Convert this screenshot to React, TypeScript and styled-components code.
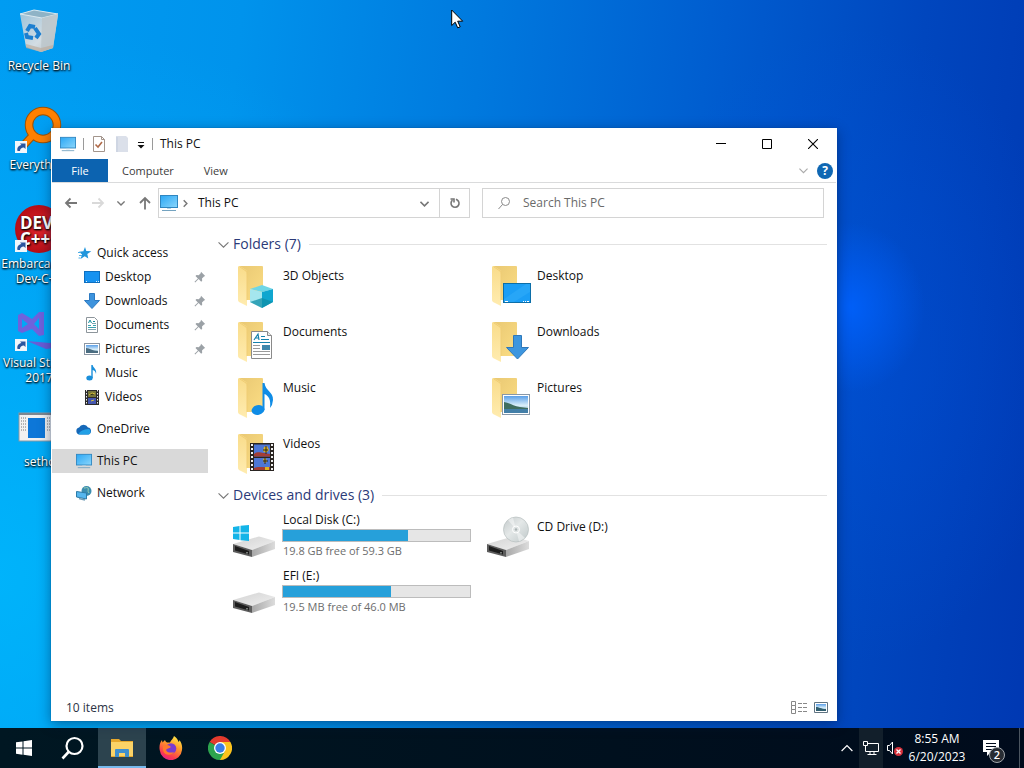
import React from "react";
import styled, { createGlobalStyle } from "styled-components";

const GlobalStyle = createGlobalStyle`
  *, *::before, *::after { box-sizing: border-box; }
  html, body { margin: 0; height: 100%; overflow: hidden; }
  body, button, input { font-family: "Open Sans", "Noto Sans", sans-serif; font-size: 12px; line-height: 16px; }
  button { margin: 0; padding: 0; border: 0; background: none; color: inherit; cursor: default; }
  ul { list-style: none; margin: 0; padding: 0; }
  svg { display: block; flex: none; }
`;

/* ---------- desktop ---------- */

const Screen = styled.div`
  height: 100vh;
  display: flex;
  flex-direction: column;
  background:
    radial-gradient(ellipse 75px 85px at 83% 40%, rgba(0, 98, 255, 0.85), rgba(0, 84, 240, 0) 100%),
    radial-gradient(ellipse 220px 320px at 83% 45%, rgba(0, 84, 225, 0.45), rgba(0, 84, 225, 0) 100%),
    radial-gradient(ellipse 560px 560px at 0% 75%, rgba(0, 190, 255, 0.7), rgba(0, 180, 255, 0) 100%),
    linear-gradient(96deg, #009cf2 0%, #0093ec 22%, #0079de 44%, #005ccf 66%, #0046be 84%, #0038b2 100%);
`;

const DesktopArea = styled.main`
  position: relative;
  flex: 1;
  min-height: 0;
`;

const Shortcuts = styled.ul`
  display: flex;
  flex-direction: column;
  width: 78px;
  padding-top: 7px;
`;

const Shortcut = styled.button`
  display: flex;
  flex-direction: column;
  align-items: center;
  gap: 3px;
  width: 100%;
  height: 99px;
  color: #fff;
  line-height: 15px;
  text-shadow: 0 1px 2px #000, 1px 1px 2px rgba(0, 0, 0, 0.8);
`;

const Pointer = styled.svg`
  position: absolute;
  left: 451px;
  top: 9px;
`;

/* ---------- explorer window ---------- */

const Window = styled.section`
  position: absolute;
  inset: 128px 187px 7px 51px;
  display: flex;
  flex-direction: column;
  padding: 1px;
  background: #fff;
  color: #111;
  box-shadow: 0 0 1px rgba(0, 50, 110, 0.5), 0 3px 12px rgba(0, 20, 60, 0.45);
`;

const TitleBar = styled.header`
  display: flex;
  align-items: center;
  height: 30px;
  flex: none;
  padding-left: 8px;
`;

const QuickTools = styled.div`
  display: flex;
  align-items: center;
  gap: 7px;
`;

const Separator = styled.span`
  width: 1px;
  height: 12px;
  background: #9a9a9a;
`;

const WindowTitle = styled.h1`
  flex: 1;
  margin: 0 0 0 7px;
  font-size: 12px;
  font-weight: 400;
`;

const Caption = styled.button`
  display: flex;
  align-items: center;
  justify-content: center;
  width: 46px;
  height: 30px;
`;

const Ribbon = styled.nav`
  display: flex;
  align-items: stretch;
  height: 24px;
  flex: none;
  border-bottom: 1px solid #dadbdc;
`;

const Tab = styled.button<{ $primary?: boolean }>`
  min-width: 56px;
  padding: 0 14px;
  background: ${(p) => (p.$primary ? "#0c63b0" : "transparent")};
  color: ${(p) => (p.$primary ? "#fff" : "#3c3c3c")};
  font-size: 11px;
`;

const RibbonEnd = styled.div`
  display: flex;
  align-items: center;
  gap: 9px;
  margin-left: auto;
  padding-right: 3px;
`;

const HelpButton = styled.button`
  width: 16px;
  height: 16px;
  border-radius: 50%;
  background: #0f67b3;
  color: #fff;
  font-weight: 700;
`;

const NavRow = styled.div`
  display: flex;
  align-items: center;
  height: 40px;
  flex: none;
  padding: 0 12px 0 12px;
`;

const NavButtons = styled.div`
  display: flex;
  align-items: center;
  justify-content: space-between;
  width: 94px;
  padding-right: 6px;
`;

const AddressBar = styled.div`
  flex: 1;
  display: flex;
  align-items: center;
  height: 30px;
  min-width: 0;
  padding-left: 1px;
  border: 1px solid #d4d4d4;
`;

const CrumbMark = styled.span`
  padding-left: 3px;
`;

const Crumb = styled.button`
  flex: 1;
  margin-left: 8px;
  text-align: left;
`;

const AddressButton = styled.button<{ $divided?: boolean }>`
  display: flex;
  align-items: center;
  justify-content: center;
  width: 30px;
  height: 28px;
  border-left: ${(p) => (p.$divided ? "1px solid #d4d4d4" : "0")};
`;

const SearchBox = styled.label`
  display: flex;
  align-items: center;
  gap: 12px;
  width: 342px;
  height: 30px;
  margin-left: 12px;
  padding: 0 14px;
  border: 1px solid #d4d4d4;
`;

const SearchInput = styled.input`
  flex: 1;
  min-width: 0;
  padding: 0;
  border: 0;
  outline: 0;
  background: transparent;
  &::placeholder { color: #6a6a6a; opacity: 1; }
`;

const Body = styled.div`
  flex: 1;
  display: flex;
  min-height: 0;
`;

const Sidebar = styled.nav`
  width: 156px;
  flex: none;
  display: flex;
  flex-direction: column;
  gap: 8px;
  padding-top: 18px;
`;

const SideItem = styled.button<{ $nested?: boolean; $selected?: boolean }>`
  display: flex;
  align-items: center;
  gap: 5px;
  width: 100%;
  height: 24px;
  padding: 0 2px 0 ${(p) => (p.$nested ? 32 : 24)}px;
  background: ${(p) => (p.$selected ? "#d9d9d9" : "transparent")};
  text-align: left;
`;

const SideLabel = styled.span`
  flex: 1;
`;

const Content = styled.div`
  flex: 1;
  min-width: 0;
  padding: 10px 9px 0 10px;
`;

const GroupHeader = styled.h2`
  display: flex;
  align-items: center;
  gap: 4px;
  height: 22px;
  margin: 0 0 5px;
  color: #2b3a78;
  font-size: 14px;
  font-weight: 400;
  &::after {
    content: "";
    flex: 1;
    height: 1px;
    margin-left: 4px;
    background: #e2e2e2;
  }
`;

const Tiles = styled.ul`
  display: grid;
  grid-template-columns: repeat(auto-fill, 254px);
  grid-auto-rows: 56px;
  padding-left: 12px;
`;

const Tile = styled.button`
  display: flex;
  align-items: flex-start;
  gap: 4px;
  width: 100%;
  height: 56px;
  text-align: left;
  & > svg { margin-top: 4px; }
`;

const TileText = styled.span<{ $detailed?: boolean }>`
  display: flex;
  flex-direction: column;
  padding-top: ${(p) => (p.$detailed ? 1 : 8)}px;
`;

const TileLine = styled.span<{ $muted?: boolean }>`
  padding-left: 1px;
  color: ${(p) => (p.$muted ? "#6d6d6d" : "#111")};
  font-size: ${(p) => (p.$muted ? 11 : 12)}px;
`;

const Meter = styled.span`
  width: 189px;
  height: 13px;
  margin: 1px 0;
  border: 1px solid #bcbcbc;
  background: #e6e6e6;
`;

const MeterFill = styled.span`
  display: block;
  height: 100%;
  background: #26a0da;
`;

const StatusBar = styled.footer`
  display: flex;
  align-items: center;
  height: 24px;
  flex: none;
  padding: 0 8px 0 14px;
  color: #2b3345;
`;

const ViewButtons = styled.div`
  display: flex;
  gap: 7px;
  margin-left: auto;
`;

/* ---------- taskbar ---------- */

const Taskbar = styled.footer`
  display: flex;
  height: 40px;
  flex: none;
  background: linear-gradient(90deg, #001722, #00101e 60%, #000b1c);
  color: #fff;
`;

const Apps = styled.div`
  display: flex;
  gap: 1px;
`;

const AppButton = styled.button<{ $active?: boolean }>`
  display: flex;
  align-items: center;
  justify-content: center;
  width: 48px;
  height: 40px;
  background: ${(p) => (p.$active ? "#2c434e" : "transparent")};
  box-shadow: ${(p) => (p.$active ? "inset 0 -2px #76b9ed" : "none")};
`;

const Tray = styled.div`
  display: flex;
  margin-left: auto;
`;

const TrayButton = styled.button<{ $lit?: boolean; $wide?: boolean }>`
  display: flex;
  align-items: center;
  justify-content: center;
  width: ${(p) => (p.$wide ? 48 : 24)}px;
  height: 40px;
  background: ${(p) => (p.$lit ? "#121f2b" : "transparent")};
`;

const Clock = styled.button`
  display: flex;
  flex-direction: column;
  align-items: center;
  justify-content: center;
  width: 60px;
  line-height: 18px;
`;

const Notifications = styled(TrayButton)`
  position: relative;
  margin-right: 4px;
`;

const Badge = styled.span`
  position: absolute;
  left: 22px;
  top: 19px;
  width: 16px;
  height: 16px;
  border: 1px solid #a3a8ad;
  border-radius: 50%;
  background: #272c33;
  font-size: 11px;
  font-weight: 600;
  line-height: 14px;
  text-align: center;
`;

const PeekButton = styled.button`
  width: 5px;
  border-left: 1px solid #4b5560;
`;

/* ---------- drawings ---------- */

const Gradients = () => (
  <svg width="0" height="0" style={{ position: "absolute" }} aria-hidden="true">
    <defs>
      <linearGradient id="folderBack" x1="0" y1="0" x2="1" y2="1"><stop offset="0" stopColor="#e9c873" /><stop offset="1" stopColor="#fbdd84" /></linearGradient>
      <linearGradient id="folderFlap" x1="0" y1="0" x2="0" y2="1"><stop offset="0" stopColor="#f9dc8a" /><stop offset="1" stopColor="#ffecb0" /></linearGradient>
      <linearGradient id="screenBlue" x1="0" y1="0" x2="1" y2="1"><stop offset="0" stopColor="#2aa7f5" /><stop offset="1" stopColor="#8bd6fb" /></linearGradient>
      <linearGradient id="driveTop" x1="0" y1="0" x2="1" y2="1"><stop offset="0" stopColor="#d2d2d2" /><stop offset="1" stopColor="#f0f0f0" /></linearGradient>
      <linearGradient id="driveSide" x1="0" y1="0" x2="1" y2="0"><stop offset="0" stopColor="#a8a8a8" /><stop offset="1" stopColor="#dcdcdc" /></linearGradient>
      <linearGradient id="sky" x1="0" y1="0" x2="0" y2="1"><stop offset="0" stopColor="#5b9fe8" /><stop offset=".55" stopColor="#d9effa" /><stop offset="1" stopColor="#77a8c6" /></linearGradient>
      <linearGradient id="disc" x1="0" y1="0" x2="1" y2="1"><stop offset="0" stopColor="#c3c9ca" /><stop offset=".45" stopColor="#e4e8e8" /><stop offset="1" stopColor="#bfc8c9" /></linearGradient>
      <linearGradient id="binSide" x1="0" y1="0" x2="1" y2="1"><stop offset="0" stopColor="#9cc3da" /><stop offset=".6" stopColor="#d3dde3" /><stop offset="1" stopColor="#b5bdc2" /></linearGradient>
      <radialGradient id="devRed"><stop offset="0" stopColor="#e0252c" /><stop offset="1" stopColor="#b50d16" /></radialGradient>
      <linearGradient id="foxFire" x1=".8" y1="0" x2=".3" y2="1"><stop offset="0" stopColor="#fff04a" /><stop offset=".4" stopColor="#ff9a2a" /><stop offset=".8" stopColor="#fb3a4f" /><stop offset="1" stopColor="#e0208c" /></linearGradient>
    </defs>
  </svg>
);

const LinkArrow = () => (
  <g>
    <rect x="0" y="35" width="12" height="12" fill="#f2f6fb" />
    <path d="M2.500 45c-.8-3.500 1-5.500 4-6L5 37.500h5.500V43l-1.600-1.500C6.500 41.500 5 43 5 45z" fill="#2a559f" />
  </g>
);

const BinIcon = () => (
  <svg width="48" height="48" viewBox="0 0 48 48">
    <path d="M5 7 11 40 26 45 38 41 43 8z" fill="url(#binSide)" />
    <path d="M5 7 19 3 43 7 27 11z" fill="#8fb3c6" stroke="#dbe9f0" strokeWidth="1" />
    <path d="M27 11 43 7 38 41 26 45z" fill="#bcc5ca" opacity=".85" />
    <path d="m11 37 15 4 12-3v3l-12 4-15-4z" fill="#bcae9f" opacity=".7" />
    <g fill="none" stroke="#1c7fd0" strokeWidth="4">
      <path d="m12 24 3-5 5 1" /><path d="m20 21 4 6-3 4" /><path d="m18 31-6-1-1-4" />
    </g>
  </svg>
);

const EverythingIcon = () => (
  <svg width="48" height="48" viewBox="0 0 48 48">
    <path d="M19 28 8 40" stroke="#9c5205" strokeWidth="8" />
    <circle cx="28" cy="19" r="14" fill="none" stroke="#9c5205" strokeWidth="8.500" />
    <circle cx="28" cy="19" r="14" fill="none" stroke="#ff8000" strokeWidth="6.500" />
    <path d="M19 28 8 40" stroke="#ff8000" strokeWidth="6" />
    <LinkArrow />
  </svg>
);

const DevIcon = () => (
  <svg width="48" height="48" viewBox="0 0 48 48">
    <circle cx="24" cy="24" r="24" fill="url(#devRed)" />
    <g fill="#fff" fontFamily="Open Sans, sans-serif" fontWeight="700" fontSize="17">
      <text x="5" y="24">DEV</text><text x="5" y="40">C++</text>
    </g>
    <LinkArrow />
  </svg>
);

const StudioIcon = () => (
  <svg width="48" height="48" viewBox="0 0 48 48">
    <path d="M3 11 7 9 17 15 24 8 29 8V31L24 32 17 25 7 29 3 27zM7 15V24L13 20zM24 14 19 20 24 25z" fill="#6f62dc" fillRule="evenodd" />
    <path d="M12 37 35 39 45 35 46 43 31 45z" fill="#6a5cd6" />
    <LinkArrow />
  </svg>
);

const SethcIcon = () => (
  <svg width="48" height="48" viewBox="0 0 48 48">
    <rect x="4" y="10" width="42" height="28" fill="#f1f1f1" stroke="#8a98a3" />
    <path d="M4 11h42" stroke="#7d8790" strokeWidth="2" />
    <rect x="13" y="15" width="17" height="20" fill="#0d77d8" />
    <path d="M6 15h5M6 18h5M6 21h5M6 24h5M6 27h5M32 15h7M32 18h7M32 21h7M32 24h7M32 27h7" stroke="#777" strokeDasharray="1 1" />
  </svg>
);

const PcIcon = ({ size = 18 }: { size?: number }) => (
  <svg width={size} height={size} viewBox="0 0 18 18">
    <rect x=".5" y="1.500" width="17" height="12" fill="url(#screenBlue)" stroke="#2f86c0" />
    <path d="M7 14h4v1H7z" fill="#b7d3e4" /><path d="M2 16.500h14" stroke="#74a3c0" />
  </svg>
);

const CheckPageIcon = () => (
  <svg width="16" height="16" viewBox="0 0 16 16" fill="none">
    <path d="M2.500.5h8l3 3v12h-11z" fill="#fff" stroke="#a3958c" /><path d="M10.500.5v3h3" stroke="#a3958c" />
    <path d="m4.500 8.500 2.500 2.500 4-5" stroke="#b06a48" strokeWidth="1.600" />
  </svg>
);

const NewFolderIcon = () => (
  <svg width="16" height="16" viewBox="0 0 16 16"><path d="M2 0h10l2 2v14H2z" fill="#dbe0ea" /><path d="M2 1h2v15H2z" fill="#cfd6e3" /></svg>
);

const CustomizeIcon = () => (
  <svg width="8" height="9" viewBox="0 0 8 9"><path d="M1 2h6v1H1zM.5 5h7L4 8.500z" fill="#111" /></svg>
);

const Chevron = ({ size = 10, color = "#777", dir = "down", weight = 1.3 }: { size?: number; color?: string; dir?: string; weight?: number }) => (
  <svg width={size} height={size} viewBox="0 0 10 10" fill="none" stroke={color} strokeWidth={weight}>
    <path d={dir === "down" ? "m.5 3 4.500 4.500L9.500 3" : dir === "up" ? "M.5 7.500 5 3l4.500 4.500" : "m3 1.500 3.500 3.500L3 8.500"} />
  </svg>
);

const Arrow = ({ dir, color = "#777" }: { dir: "left" | "right" | "up"; color?: string }) => (
  <svg width="14" height="14" viewBox="0 0 14 14" fill="none" stroke={color} strokeWidth="1.800">
    <path d={dir === "left" ? "M13 7H2M6.500 2.500 2 7l4.500 4.500" : dir === "right" ? "M1 7h11M7.500 2.500 12 7l-4.500 4.500" : "M7 13.500V2M2 7l5-5 5 5"} />
  </svg>
);

const StarIcon = () => (
  <svg width="16" height="16" viewBox="0 0 16 16"><path d="m9 2 1.300 4 5 .2-4 2.700 1 4.600-3.600-2.300-4.200 2.900 1.600-4.700L3 6.800l4.400-.6z" fill="#2196dc" /><path d="M2 7.500h3M3 10.500h3M2.500 13h2" stroke="#4eaee6" /></svg>
);
const DesktopIcon = () => (
  <svg width="16" height="16" viewBox="0 0 16 16"><rect x=".5" y="2.500" width="15" height="11" fill="#1792f0" stroke="#0e6fc0" /><path d="M2 12.500h1M12 12.500h1M14 12.500h1" stroke="#e2f4ff" /></svg>
);
const DownIcon = () => (
  <svg width="16" height="16" viewBox="0 0 16 16"><path d="M5.500.5h5v7h5L8 15.500.5 7.500h5z" fill="#3d93dd" stroke="#2c7ac2" /></svg>
);
const DocIcon = () => (
  <svg width="16" height="16" viewBox="0 0 16 16"><path d="M2.500.5h8l3 3v12h-11z" fill="#fff" stroke="#8d959b" /><path d="M4.500 6 6 3l1.500 3M9 4.500h2" stroke="#168d9c" fill="none" /><path d="M4 8.500h3M9 8.500h3M4 10.500h8" stroke="#3aa1b0" /><path d="M4 12.500h8M8 6.500h4" stroke="#7fa4b0" /></svg>
);
const PictureIcon = () => (
  <svg width="16" height="16" viewBox="0 0 16 16"><rect x=".5" y="2.500" width="15" height="11" fill="#fff" stroke="#8b96a3" /><path d="M2 4h12v8H2z" fill="url(#sky)" /><path d="M2 7c4 0 6 3 12 3v2H2z" fill="#4a6c80" /></svg>
);
const MusicIcon = () => (
  <svg width="16" height="16" viewBox="0 0 16 16" fill="#1a8fdb"><ellipse cx="5.500" cy="13" rx="3.200" ry="2.500" /><path d="M7.300 0h1.400c.3 3 4.500 4 3.300 9-.3-2.500-1.500-3.500-3.300-4v8H7.300z" /></svg>
);
const VideoIcon = () => (
  <svg width="16" height="16" viewBox="0 0 16 16"><path d="M1 1h14v15H1z" fill="#2b2b2b" /><path d="M4 2h8v6H4z" fill="#77763b" /><path d="M4 9h8v6H4z" fill="#4557b0" /><path d="m5 6 3-2 3 1M7 12l3-1" stroke="#d6c23f" /><path d="M2.500 1v15M13.500 1v15" stroke="#eee" strokeDasharray="1.500 1.500" /></svg>
);
const CloudIcon = () => (
  <svg width="16" height="16" viewBox="0 0 16 16"><path d="M3.500 13.500a3.500 3.500 0 0 1-.4-6.900A5 5 0 0 1 12 6.500a3.600 3.600 0 0 1 .5 7z" fill="#1568b8" /><path d="M2.500 13.300c1.500-3.500 5-5 10.500-5.300a3 3 0 0 1-.5 5.500h-9z" fill="#22a0e6" /></svg>
);
const NetworkIcon = () => (
  <svg width="16" height="16" viewBox="0 0 16 16"><circle cx="10.500" cy="6" r="5" fill="#3b8db0" /><path d="M8 3c2 0 3-1 4 0s-1 3 1 5" stroke="#9bd2b4" fill="none" /><path d="m.5 6.500 10 1.500v6l-10-2z" fill="#55b6ee" stroke="#2d7ba7" /><path d="m3 13.500 6 1.500" stroke="#6f9db6" strokeWidth="1.500" /></svg>
);
const PinIcon = () => (
  <svg width="12" height="12" viewBox="0 0 12 12"><path d="m7 .8 4.200 4.200-1.200.5-2 2 .2 2.200-1 1-2.600-2.600L1.200 11.500l-.7-.7L3.900 7.400 1.500 5l1-1 2.200.2 2-2z" fill="#9ba1a6" /></svg>
);

const FolderIcon = ({ children }: { children: React.ReactNode }) => (
  <svg width="48" height="48" viewBox="0 0 48 48">
    <path d="M9 2h23q1 0 1 1v33H16z" fill="url(#folderBack)" />
    <path d="M8 3q0-1 2-1l6 4q1 1 1 3v33l-8-4q-1-1-1-2z" fill="url(#folderFlap)" />
    <path d="M10 3l6 4q1 1 1 3v26" stroke="#f0cd74" fill="none" />
    {children}
  </svg>
);

const CubeArt = () => (<g><path d="m20 25 12-4 11 4-11 3z" fill="#6ed6e6" /><path d="m20 25 12 3v16l-12-6z" fill="#a5e6ee" /><path d="m32 28 11-3v13l-11 6z" fill="#10a6cf" /><path d="m20 38 12-4 11 4-11 6z" fill="#0f8ea6" opacity=".75" /></g>);
const DocumentArt = () => (<g><path d="M21.500 11.500h16l4 4v23h-20z" fill="#fff" stroke="#8a8a8a" /><path d="M37.500 11.500v4h4" fill="#e9e9e9" stroke="#8a8a8a" /><path d="m24 20 4-6 1 6M25 18h4M31 16.500h4M31 19.500h8M23 22.500h17" stroke="#1582ad" fill="none" strokeWidth="1.200" /><path d="M23 25.500h7M23 28.500h7M23 31.500h17M23 34.500h17" stroke="#9a9a9a" /><path d="M32 25h8v5h-8z" fill="#3f88ad" /></g>);
const NoteArt = () => (<g fill="#0f8ce6"><ellipse cx="28" cy="34" rx="6.500" ry="4.800" transform="rotate(-12 28 34)" /><path d="M32.500 7h2c1 8 9 9 8.500 17q-.3 5-3 8c1-8-1-12-5.500-14v16h-2z" /></g>);
const FilmArt = () => (<g><path d="M20 11h24v28H20z" fill="#2a2522" /><path d="M24 12.500h16v12H24zM24 26h16v12H24z" fill="#4d77d6" /><path d="M24 22c4-3 6-1 10-1l6 1v2.500H24zM24 36c5-2 9 0 16-1v3H24z" fill="#a33d35" /><path d="m34 15 3-1 2 4-3 3-3-2zM33 27l3-1 1 4-3 1zM35 35h4v3h-4z" fill="#e0b31f" /><path d="M33 18h5M36 14v8M33 29h5M35 26v6" stroke="#222" /><path d="M22 12v27M42 12v27" stroke="#f2f2f2" strokeWidth="2" strokeDasharray="2 2" /></g>);
const DesktopArt = () => (<g><rect x="19.500" y="19.500" width="27" height="19" fill="#1b9ef5" stroke="#0c6ea8" /><path d="M20 35 42 20h4v8L30 38H20z" fill="#34adfa" opacity=".5" /><path d="M21 37.500h3M39 37.500h1M41 37.500h1M43 37.500h2" stroke="#fff" /></g>);
const DownArt = () => <path d="M29.500 15.500h8v12h7L33.500 39 22.500 27.500h7z" fill="#3d96df" stroke="#2e78ba" />;
const PhotoArt = () => (<g><rect x="18.500" y="18.500" width="27" height="20" fill="#fff" stroke="#8898a8" /><path d="M20 20h24v17H20z" fill="url(#sky)" /><path d="M20 26c6 1 9 4 16 5l8 1v1H20z" fill="#3f6e60" /><path d="M20 33h24v4H20z" fill="#437fa8" /></g>);

const DriveIcon = ({ children }: { children?: React.ReactNode }) => (
  <svg width="48" height="48" viewBox="0 0 48 48">
    <path d="M3 29 27 22q2-1 4 0l14 4-23 9z" fill="url(#driveTop)" />
    <path d="m22 35 23-9v8l-23 8z" fill="url(#driveSide)" />
    <path d="m3 29 19 6v7L3 37z" fill="#5c5c5c" /><path d="m5 31 14 5v3.500L5 35.500z" fill="#1c1c1c" /><path d="M17 37v1.500" stroke="#cfd8d0" />
    {children}
  </svg>
);
const WindowsArt = () => <path d="M3 12 9.500 11v6.500H3zM10.500 10.800 19 10v7.500h-8.500zM3 18.500h6.500V25L3 24zM10.500 18.500H19V26l-8.500-.8z" fill="#14b4e8" />;
const DiscArt = () => (<g><circle cx="32" cy="14.500" r="12.500" fill="url(#disc)" stroke="#b6bebf" strokeWidth=".7" /><path d="M32 14.500 24 5l5-2.500zM32 14.500 41 23l-6 3.500z" fill="#fff" opacity=".45" /><circle cx="32" cy="14.500" r="3.500" fill="#dfe4e4" stroke="#fff" /><circle cx="32" cy="14.500" r="1.200" fill="#aab2b3" /></g>);

const FileExplorerIcon = () => (
  <svg width="24" height="24" viewBox="0 0 24 24">
    <path d="M1 3h8l2 2h12v16H1z" fill="#e7a82c" /><path d="M1 6h22v14H1z" fill="#fbd367" />
    <path d="M5 21v-7q0-1 1-1h12q1 0 1 1v7h-4v-4H9v4z" fill="#3f8fce" />
  </svg>
);
const FirefoxIcon = () => (
  <svg width="24" height="24" viewBox="0 0 24 24">
    <path d="M15 0c3 2 4 4 4.500 6 1-.4.8-2 .8-2 2.500 3 3.200 6 2.700 10A11.200 11.200 0 0 1 .7 14C0 10 1 6 3 4l.5 2.500L6 4c.3 1 1 2 2 2.500h3C12 4 14 3 15 0z" fill="url(#foxFire)" />
    <circle cx="12" cy="12.500" r="5.300" fill="#7a3bd0" /><path d="M4 10c4-2 6-1 8 1-2 2-4 1-5 3 1 3 5 3 8 2-2 4-10 4-11-2z" fill="#ff7a2c" />
  </svg>
);
const ChromeIcon = () => (
  <svg width="24" height="24" viewBox="0 0 24 24">
    <path d="M12 12 1.600 6A12 12 0 0 1 22.400 6z" fill="#e33b2e" /><path d="M12 12 22.400 6A12 12 0 0 1 12 24z" fill="#fcc31e" /><path d="M12 12v12A12 12 0 0 1 1.600 6z" fill="#2da44e" />
    <path d="M12 6h10.400L12 24l5.200-9z" fill="#fcc31e" /><path d="M6.800 15 1.600 6 12 24l5-9z" fill="#2da44e" />
    <circle cx="12" cy="12" r="6" fill="#fff" /><circle cx="12" cy="12" r="4.700" fill="#3a7de8" />
  </svg>
);

/* ---------- data ---------- */

const shortcuts = [
  { name: "Recycle Bin", icon: <BinIcon /> },
  { name: "Everything", icon: <EverythingIcon /> },
  { name: "Embarcadero Dev-C++", icon: <DevIcon /> },
  { name: "Visual Studio 2017", icon: <StudioIcon /> },
  { name: "sethc", icon: <SethcIcon /> },
];

const quickAccess = [
  { name: "Desktop", icon: <DesktopIcon />, pinned: true },
  { name: "Downloads", icon: <DownIcon />, pinned: true },
  { name: "Documents", icon: <DocIcon />, pinned: true },
  { name: "Pictures", icon: <PictureIcon />, pinned: true },
  { name: "Music", icon: <MusicIcon />, pinned: false },
  { name: "Videos", icon: <VideoIcon />, pinned: false },
];

const folders = [
  { name: "3D Objects", art: <CubeArt /> },
  { name: "Desktop", art: <DesktopArt /> },
  { name: "Documents", art: <DocumentArt /> },
  { name: "Downloads", art: <DownArt /> },
  { name: "Music", art: <NoteArt /> },
  { name: "Pictures", art: <PhotoArt /> },
  { name: "Videos", art: <FilmArt /> },
];

const drives = [
  { name: "Local Disk (C:)", art: <WindowsArt />, used: 67, free: "19.8 GB free of 59.3 GB" },
  { name: "CD Drive (D:)", art: <DiscArt /> },
  { name: "EFI (E:)", used: 58, free: "19.5 MB free of 46.0 MB" },
];

export default function App() {
  return (
    <Screen>
      <GlobalStyle />
      <Gradients />
      <DesktopArea>
        <Shortcuts>
          {shortcuts.map((s) => (
            <li key={s.name}><Shortcut>{s.icon}<span>{s.name}</span></Shortcut></li>
          ))}
        </Shortcuts>

        <Window aria-label="This PC">
          <TitleBar>
            <QuickTools>
              <PcIcon size={16} />
              <Separator />
              <button aria-label="Properties"><CheckPageIcon /></button>
              <button aria-label="New folder"><NewFolderIcon /></button>
              <button aria-label="Customize toolbar"><CustomizeIcon /></button>
              <Separator />
            </QuickTools>
            <WindowTitle>This PC</WindowTitle>
            <Caption aria-label="Minimize"><svg width="10" height="10"><path d="M0 4.500h10" stroke="#000" /></svg></Caption>
            <Caption aria-label="Maximize"><svg width="10" height="10"><path d="M.5.5h9v9h-9z" fill="none" stroke="#000" /></svg></Caption>
            <Caption aria-label="Close"><svg width="10" height="10"><path d="m0 0 10 10M10 0 0 10" stroke="#000" strokeWidth="1.100" /></svg></Caption>
          </TitleBar>

          <Ribbon>
            <Tab $primary>File</Tab>
            <Tab>Computer</Tab>
            <Tab>View</Tab>
            <RibbonEnd>
              <button aria-label="Expand ribbon"><Chevron size={9} color="#aaa" /></button>
              <HelpButton>?</HelpButton>
            </RibbonEnd>
          </Ribbon>

          <NavRow>
            <NavButtons>
              <button aria-label="Back"><Arrow dir="left" /></button>
              <button aria-label="Forward"><Arrow dir="right" color="#d9d9d9" /></button>
              <button aria-label="Recent locations"><Chevron size={8} weight={1.8} /></button>
              <button aria-label="Up"><Arrow dir="up" /></button>
            </NavButtons>
            <AddressBar>
              <PcIcon />
              <CrumbMark><Chevron size={9} dir="right" weight={1.6} /></CrumbMark>
              <Crumb>This PC</Crumb>
              <AddressButton aria-label="Previous locations"><Chevron size={9} weight={1.8} /></AddressButton>
              <AddressButton aria-label="Refresh" $divided>
                <svg width="12" height="12" viewBox="0 0 12 12" fill="none" stroke="#777" strokeWidth="1.600"><path d="M8.300 3A4 4 0 1 1 3.500 3.200M1.500 2H5v3.500M8.300 3 7 2.300" /></svg>
              </AddressButton>
            </AddressBar>
            <SearchBox>
              <svg width="14" height="14" viewBox="0 0 14 14" fill="none" stroke="#8a8a8a"><circle cx="8.500" cy="5.500" r="4" /><path d="m5.500 8.500-4 4.500" /></svg>
              <SearchInput type="text" placeholder="Search This PC" aria-label="Search This PC" />
            </SearchBox>
          </NavRow>

          <Body>
            <Sidebar>
              <div>
                <SideItem><StarIcon /><SideLabel>Quick access</SideLabel></SideItem>
                {quickAccess.map((q) => (
                  <SideItem key={q.name} $nested>{q.icon}<SideLabel>{q.name}</SideLabel>{q.pinned && <PinIcon />}</SideItem>
                ))}
              </div>
              <SideItem><CloudIcon /><SideLabel>OneDrive</SideLabel></SideItem>
              <SideItem $selected><PcIcon size={16} /><SideLabel>This PC</SideLabel></SideItem>
              <SideItem><NetworkIcon /><SideLabel>Network</SideLabel></SideItem>
            </Sidebar>
            <Content>
              <GroupHeader><Chevron size={11} weight={1} />Folders (7)</GroupHeader>
              <Tiles>
                {folders.map((f) => (
                  <li key={f.name}>
                    <Tile><FolderIcon>{f.art}</FolderIcon><TileText><TileLine>{f.name}</TileLine></TileText></Tile>
                  </li>
                ))}
              </Tiles>
              <GroupHeader><Chevron size={11} weight={1} />Devices and drives (3)</GroupHeader>
              <Tiles>
                {drives.map((d) => (
                  <li key={d.name}>
                    <Tile>
                      <DriveIcon>{d.art}</DriveIcon>
                      <TileText $detailed={!!d.free}>
                        <TileLine>{d.name}</TileLine>
                        {d.free && <Meter><MeterFill style={{ width: `${d.used}%` }} /></Meter>}
                        {d.free && <TileLine $muted>{d.free}</TileLine>}
                      </TileText>
                    </Tile>
                  </li>
                ))}
              </Tiles>
            </Content>
          </Body>

          <StatusBar>
            <span>10 items</span>
            <ViewButtons>
              <button aria-label="Details view">
                <svg width="16" height="14" viewBox="0 0 16 14" fill="none" stroke="#888"><path d="M.5.500h4V4.500h-4zM.5 4.500h4V8.500h-4zM.5 8.500h4V12.500h-4zM7 2.500h4M12 2.500h4M7 6.500h4M12 6.500h4M7 10.500h4M12 10.500h4" /></svg>
              </button>
              <button aria-label="Large icons view">
                <svg width="14" height="14" viewBox="0 0 14 14"><path d="M.5 1.500h13v10H.5z" fill="#fff" stroke="#607482" /><path d="M2 3h10v7H2z" fill="url(#sky)" /><path d="M2 6c3 0 5 2 10 2v2H2z" fill="#315f70" /></svg>
              </button>
            </ViewButtons>
          </StatusBar>
        </Window>

        <Pointer width="13" height="20" viewBox="0 0 13 20"><path d="M.7 1v15.500l3.500-3.300 2.500 5.600 2.500-1-2.500-5.600h5z" fill="#fff" stroke="#000" /></Pointer>
      </DesktopArea>

      <Taskbar>
        <Apps>
          <AppButton aria-label="Start"><svg width="16" height="16" viewBox="0 0 16 16"><path d="M0 2.300 6.500 1.400v6.200H0zM7.500 1.200 16 0v7.600H7.500zM0 8.500h6.500v6.200L0 13.800zM7.500 8.500H16V16l-8.500-1.200z" fill="#fff" /></svg></AppButton>
          <AppButton aria-label="Search"><svg width="24" height="24" viewBox="0 0 24 24" fill="none" stroke="#fff" strokeWidth="2.200"><circle cx="13.500" cy="10" r="8" /><path d="m8 15.500-6.500 7" strokeWidth="2.600" /></svg></AppButton>
          <AppButton aria-label="File Explorer" $active><FileExplorerIcon /></AppButton>
          <AppButton aria-label="Firefox"><FirefoxIcon /></AppButton>
          <AppButton aria-label="Chrome"><ChromeIcon /></AppButton>
        </Apps>
        <Tray>
          <TrayButton aria-label="Show hidden icons"><Chevron size={12} dir="up" color="#fff" weight={1} /></TrayButton>
          <TrayButton aria-label="Network" $lit>
            <svg width="18" height="16" viewBox="0 0 18 16" fill="none" stroke="#fff"><path d="M5.500 3.500h11v8H3.500V6M8 12v2.500M12 12v2.500M5.500 14.500h9" /><path d="M1.500 1.500h4v4h-4z" /></svg>
          </TrayButton>
          <TrayButton aria-label="Volume muted">
            <svg width="18" height="16" viewBox="0 0 18 16" fill="none" stroke="#fff"><path d="M1.500 5.500h2L6.500 2v12l-3-3.500h-2z" /><circle cx="12.500" cy="11.500" r="4.500" fill="#d5303b" stroke="none" /><path d="m10.500 9.500 4 4M14.500 9.500l-4 4" strokeWidth="1.300" /></svg>
          </TrayButton>
          <Clock><span>8:55 AM</span><span>6/20/2023</span></Clock>
          <Notifications aria-label="Notifications" $wide>
            <svg width="16" height="16" viewBox="0 0 16 16"><path d="M0 0h16v12H8l-4 4v-4H0z" fill="#fff" /><path d="M3 3.500h10M3 6.500h10M3 9.500h6" stroke="#000b1c" /></svg>
            <Badge>2</Badge>
          </Notifications>
          <PeekButton aria-label="Show desktop" />
        </Tray>
      </Taskbar>
    </Screen>
  );
}
